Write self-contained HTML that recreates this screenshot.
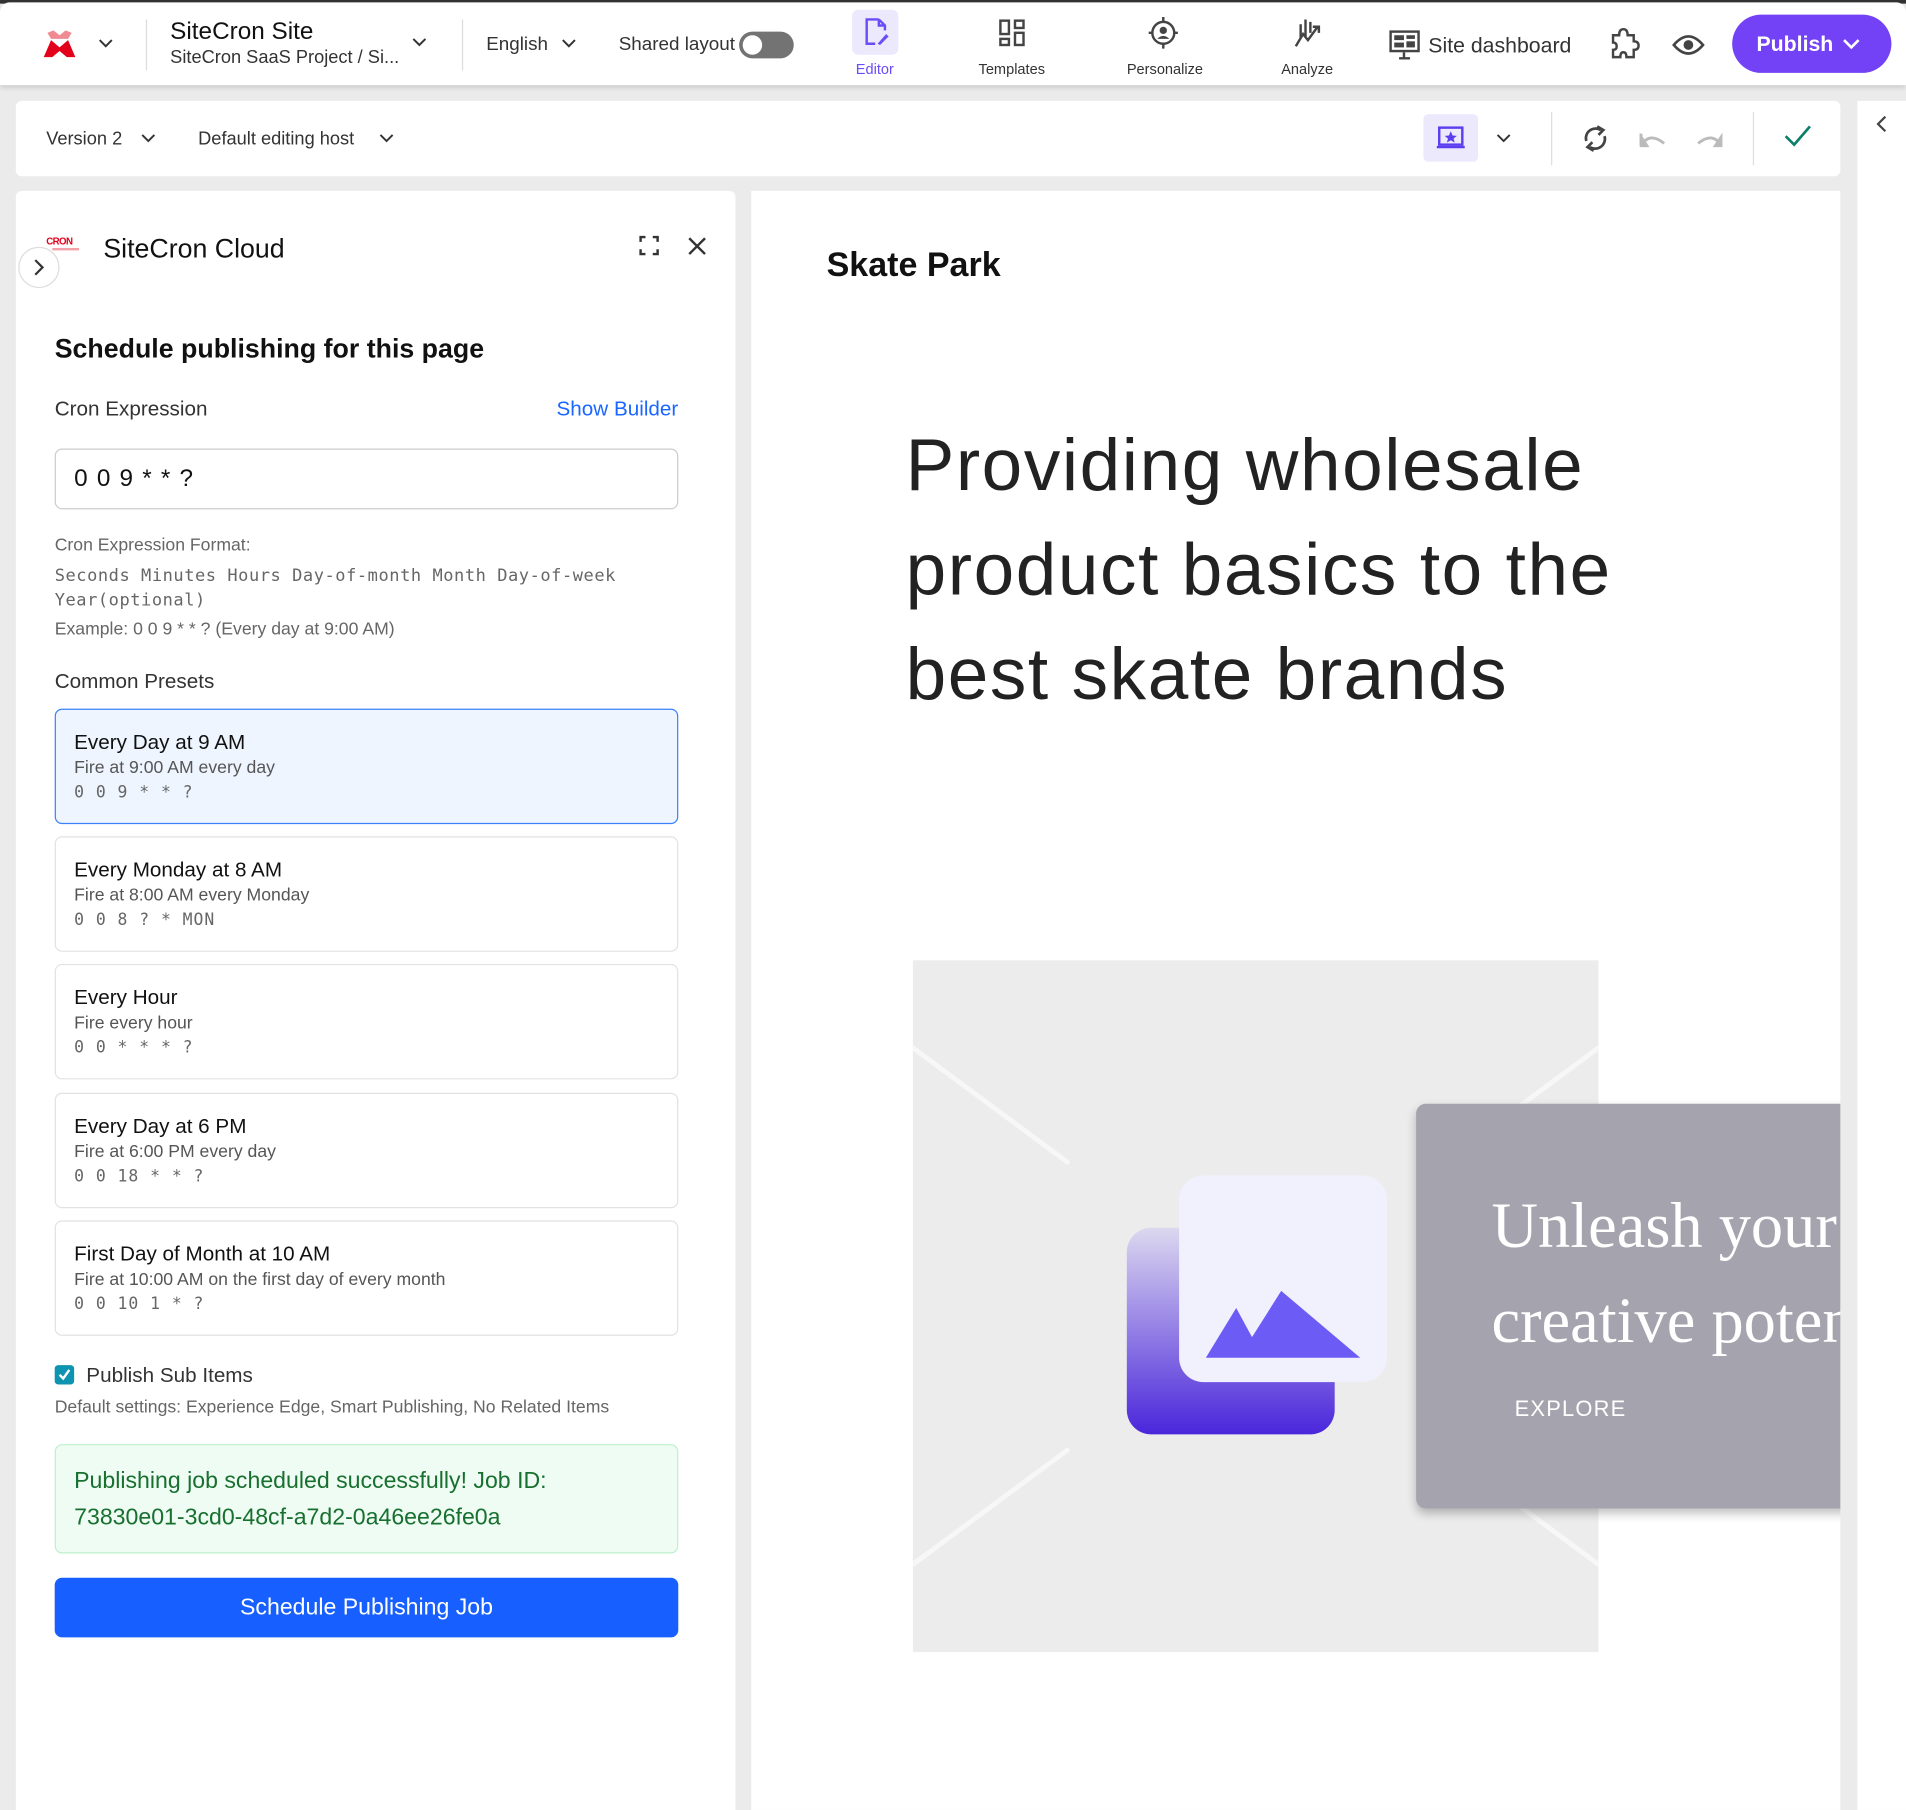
<!DOCTYPE html>
<html><head><meta charset="utf-8"><style>
*{margin:0;padding:0;box-sizing:border-box}
html,body{width:1906px;height:1810px;overflow:hidden;background:#ebebeb}
#w{position:absolute;left:0;top:0;width:1568px;height:1489px;transform:scale(1.21556);transform-origin:0 0;font-family:"Liberation Sans",sans-serif;color:#222}
.a{position:absolute;white-space:nowrap}
.c{display:flex;align-items:center}
.mono{font-family:"DejaVu Sans Mono","Liberation Mono",monospace}
.card{position:absolute;left:45px;width:513px;height:95px;border:1px solid #e2e2e2;border-radius:6px;background:#fff}
.card .t{position:absolute;left:15px;top:17px;font-size:17px;color:#111}
.card .d{position:absolute;left:15px;top:40px;font-size:14.5px;color:#555}
.card .m{position:absolute;left:15px;top:60px;font-size:13.5px;color:#666;letter-spacing:0.8px}
svg{position:absolute;overflow:visible}
</style></head><body><div id="w">
<!-- header -->
<div class="a" style="left:0;top:0;width:1568px;height:3px;background:#333"></div>
<div class="a" style="left:0;top:2px;width:1568px;height:68px;background:#fff;border-radius:8px 8px 0 0;box-shadow:0 2px 4px rgba(0,0,0,.12)"></div>
<svg style="left:36px;top:25px" width="26" height="24"><path d="M3 2 L8 0 L13 4 L18 0 L23 2 L20 7 L6 7 Z" fill="#f08a93"/><path d="M6 8 L13 14 L20 8 L26 22 L19 22 L13 17 L7 22 L0 22 Z" fill="#e3001b"/></svg>
<svg style="left:81px;top:32px" width="12" height="8"><path d="M1 1 L6 6 L11 1" stroke="#333" stroke-width="1.6" fill="none"/></svg>
<div class="a" style="left:120px;top:16px;width:1px;height:42px;background:#ddd"></div>
<div class="a" style="left:140px;top:15px;font-size:20px;color:#111">SiteCron Site</div>
<div class="a" style="left:140px;top:39px;font-size:15px;color:#333">SiteCron SaaS Project / Si...</div>
<svg style="left:339px;top:31px" width="12" height="8"><path d="M1 1 L6 6 L11 1" stroke="#333" stroke-width="1.6" fill="none"/></svg>
<div class="a" style="left:380px;top:16px;width:1px;height:42px;background:#ddd"></div>
<div class="a" style="left:400px;top:28px;font-size:15.5px;color:#333">English</div>
<svg style="left:462px;top:32px" width="12" height="8"><path d="M1 1 L6 6 L11 1" stroke="#333" stroke-width="1.6" fill="none"/></svg>
<div class="a" style="left:509px;top:28px;font-size:15.5px;color:#333">Shared layout</div>
<div class="a" style="left:608px;top:26px;width:45px;height:22px;border-radius:11px;background:#737373"></div>
<div class="a" style="left:611px;top:29px;width:16px;height:16px;border-radius:8px;background:#fff"></div>
<div class="a" style="left:701px;top:8px;width:38px;height:37px;border-radius:5px;background:#ece9fd"></div>
<svg style="left:710px;top:15px" width="22" height="24"><path d="M13 1 H3 V21 H10 M13 1 L18 6 V10 M13 1 V6 H18" stroke="#6b4cf6" stroke-width="2" fill="none"/><path d="M12 21 L19 13 L21 15 L14 22 Z" fill="#6b4cf6"/></svg>
<div class="a" style="left:704px;top:50px;font-size:12px;color:#6b4cf6">Editor</div>
<svg style="left:822px;top:16px" width="22" height="22"><rect x="1" y="1" width="7" height="11" fill="none" stroke="#444" stroke-width="2"/><rect x="13" y="1" width="7" height="6" fill="none" stroke="#444" stroke-width="2"/><rect x="1" y="16" width="7" height="5" fill="none" stroke="#444" stroke-width="2"/><rect x="13" y="11" width="7" height="10" fill="none" stroke="#444" stroke-width="2"/></svg>
<div class="a" style="left:805px;top:50px;font-size:12px;color:#333">Templates</div>
<svg style="left:945px;top:14px" width="24" height="26"><circle cx="12" cy="13" r="9" fill="none" stroke="#444" stroke-width="2"/><path d="M12 0 V4 M12 22 V26 M0 13 H3 M21 13 H24" stroke="#444" stroke-width="2"/><circle cx="12" cy="11" r="3" fill="#444"/><path d="M7 18 Q12 13 17 18" fill="#444"/></svg>
<div class="a" style="left:927px;top:50px;font-size:12px;color:#333">Personalize</div>
<svg style="left:1064px;top:14px" width="24" height="26"><path d="M2 24 L8 14 L12 19 L20 8 M16 8 H21 V13 M6 6 V18 M10 2 V16 M14 4 V13" stroke="#444" stroke-width="2" fill="none"/></svg>
<div class="a" style="left:1054px;top:50px;font-size:12px;color:#333">Analyze</div>
<svg style="left:1143px;top:25px" width="25" height="24"><rect x="1" y="1" width="23" height="16" fill="none" stroke="#444" stroke-width="2"/><rect x="4" y="4" width="8" height="4" fill="#444"/><rect x="14" y="4" width="7" height="3" fill="#444"/><rect x="14" y="9" width="7" height="5" fill="#444"/><rect x="4" y="10" width="8" height="4" fill="#444"/><path d="M12 18 V23 M8 23 H17" stroke="#444" stroke-width="2"/></svg>
<div class="a" style="left:1175px;top:27px;font-size:17.5px;color:#333">Site dashboard</div>
<svg style="left:1324px;top:23px" width="24" height="26"><path d="M3 6 H8 Q8 1 11.5 1 Q15 1 15 6 H20 V11 Q24 11 24 14.5 Q24 18 20 18 V24 H14 Q14 20 11.5 20 Q9 20 9 24 H3 V18 Q6 18 6 15 Q6 12 3 12 Z" fill="none" stroke="#444" stroke-width="2"/></svg>
<svg style="left:1376px;top:27px" width="26" height="20"><path d="M1 10 Q13 -4 25 10 Q13 24 1 10 Z" fill="none" stroke="#444" stroke-width="2.2"/><circle cx="13" cy="10" r="4" fill="#444"/></svg>
<div class="a c" style="left:1425px;top:12px;width:131px;height:48px;border-radius:24px;background:#7442f6;color:#fff;font-size:17.5px;font-weight:bold;padding-left:20px">Publish</div>
<svg style="left:1516px;top:32px" width="14" height="9"><path d="M1 1 L7 7 L13 1" stroke="#fff" stroke-width="2.2" fill="none"/></svg>

<!-- toolbar -->
<div class="a" style="left:13px;top:83px;width:1501px;height:62px;background:#fff;border-radius:5px"></div>
<div class="a" style="left:38px;top:106px;font-size:15px;color:#333">Version 2</div>
<svg style="left:116px;top:110px" width="12" height="8"><path d="M1 1 L6 6 L11 1" stroke="#333" stroke-width="1.6" fill="none"/></svg>
<div class="a" style="left:163px;top:106px;font-size:15px;color:#333">Default editing host</div>
<svg style="left:312px;top:110px" width="12" height="8"><path d="M1 1 L6 6 L11 1" stroke="#333" stroke-width="1.6" fill="none"/></svg>
<div class="a" style="left:1171px;top:94px;width:45px;height:39px;border-radius:4px;background:#ece9fd"></div>
<svg style="left:1182px;top:104px" width="23" height="19"><rect x="2" y="1" width="19" height="14" fill="none" stroke="#5b3ef0" stroke-width="2"/><path d="M0 17 H23" stroke="#5b3ef0" stroke-width="2"/><path d="M11.5 4 L13 7.5 L16.5 7.8 L13.8 10 L14.7 13.3 L11.5 11.4 L8.3 13.3 L9.2 10 L6.5 7.8 L10 7.5 Z" fill="#5b3ef0"/></svg>
<svg style="left:1231px;top:110px" width="12" height="8"><path d="M1 1 L6 6 L11 1" stroke="#333" stroke-width="1.6" fill="none"/></svg>
<div class="a" style="left:1276px;top:92px;width:1px;height:44px;background:#ddd"></div>
<svg style="left:1300px;top:102px" width="25" height="24"><path d="M5 14 A8 8 0 0 1 17 5 M20 10 A8 8 0 0 1 8 19" stroke="#444" stroke-width="2.2" fill="none"/><path d="M14 2 L19 5 L15 9 M11 22 L6 19 L10 15" stroke="#444" stroke-width="2.2" fill="none"/></svg>
<svg style="left:1347px;top:106px" width="25" height="16"><path d="M3 14 V4 M3 14 Q10 2 22 12" stroke="#bbb" stroke-width="2.4" fill="none"/><path d="M2 3 V15 H10 Z" fill="#bbb"/></svg>
<svg style="left:1394px;top:106px" width="25" height="16"><path d="M3 12 Q15 2 22 14" stroke="#bbb" stroke-width="2.4" fill="none"/><path d="M23 3 V15 H15 Z" fill="#bbb"/></svg>
<div class="a" style="left:1442px;top:92px;width:1px;height:44px;background:#ddd"></div>
<svg style="left:1468px;top:103px" width="22" height="18"><path d="M1 9 L8 16 L21 1" stroke="#0a7f6a" stroke-width="2.2" fill="none"/></svg>
<div class="a" style="left:1528px;top:83px;width:40px;height:1406px;background:#fff"></div>
<svg style="left:1543px;top:95px" width="9" height="14"><path d="M8 1 L2 7 L8 13" stroke="#444" stroke-width="1.8" fill="none"/></svg>

<!-- left panel -->
<div class="a" style="left:13px;top:157px;width:592px;height:1332px;background:#fff;border-radius:5px 5px 0 0"></div>
<div class="a" style="left:38px;top:194px;font-size:8px;font-weight:bold;color:#e3001b;letter-spacing:-0.5px">CRON</div>
<div class="a" style="left:43px;top:204px;width:22px;height:2px;background:#f3a0a8"></div>
<div class="a" style="left:15px;top:203px;width:34px;height:34px;border-radius:17px;border:1px solid #ddd;background:#fff"></div>
<svg style="left:28px;top:213px" width="8" height="14"><path d="M1 1 L7 7 L1 13" stroke="#333" stroke-width="1.8" fill="none"/></svg>
<div class="a" style="left:85px;top:192px;font-size:22px;color:#111">SiteCron Cloud</div>
<svg style="left:526px;top:194px" width="16" height="16"><path d="M1 5 V1 H5 M11 1 H15 V5 M15 11 V15 H11 M5 15 H1 V11" stroke="#333" stroke-width="2" fill="none"/></svg>
<svg style="left:566px;top:195px" width="15" height="15"><path d="M1 1 L14 14 M14 1 L1 14" stroke="#333" stroke-width="2" fill="none"/></svg>
<div class="a" style="left:45px;top:274px;font-size:22px;font-weight:bold;color:#111">Schedule publishing for this page</div>
<div class="a" style="left:45px;top:327px;font-size:17px;color:#333">Cron Expression</div>
<div class="a" style="right:1010px;top:327px;font-size:17px;color:#1a66ff">Show Builder</div>
<div class="a" style="left:45px;top:369px;width:513px;height:50px;border:1px solid #ccc;border-radius:6px"></div>
<div class="a" style="left:61px;top:383px;font-size:20px;color:#111;letter-spacing:1px">0 0 9 * * ?</div>
<div class="a" style="left:45px;top:441px;font-size:14.5px;color:#666">Cron Expression Format:</div>
<div class="a mono" style="left:45px;top:464px;font-size:14px;color:#666;line-height:20px;letter-spacing:0.45px">Seconds Minutes Hours Day-of-month Month Day-of-week<br>Year(optional)</div>
<div class="a" style="left:45px;top:510px;font-size:14.5px;color:#666">Example: 0 0 9 * * ? (Every day at 9:00 AM)</div>
<div class="a" style="left:45px;top:551px;font-size:17px;color:#333">Common Presets</div>
<div class="card" style="top:583px;background:#eef5ff;border-color:#3b82f6"><div class="t">Every Day at 9 AM</div><div class="d">Fire at 9:00 AM every day</div><div class="m mono">0 0 9 * * ?</div></div>
<div class="card" style="top:688px"><div class="t">Every Monday at 8 AM</div><div class="d">Fire at 8:00 AM every Monday</div><div class="m mono">0 0 8 ? * MON</div></div>
<div class="card" style="top:793px"><div class="t">Every Hour</div><div class="d">Fire every hour</div><div class="m mono">0 0 * * * ?</div></div>
<div class="card" style="top:899px"><div class="t">Every Day at 6 PM</div><div class="d">Fire at 6:00 PM every day</div><div class="m mono">0 0 18 * * ?</div></div>
<div class="card" style="top:1004px"><div class="t">First Day of Month at 10 AM</div><div class="d">Fire at 10:00 AM on the first day of every month</div><div class="m mono">0 0 10 1 * ?</div></div>
<div class="a" style="left:45px;top:1123px;width:16px;height:16px;border-radius:3px;background:#0e93b0"></div>
<svg style="left:48px;top:1126px" width="10" height="10"><path d="M1 5 L4 8 L9 1" stroke="#fff" stroke-width="2" fill="none"/></svg>
<div class="a" style="left:71px;top:1122px;font-size:17px;color:#333">Publish Sub Items</div>
<div class="a" style="left:45px;top:1150px;font-size:14.5px;color:#666">Default settings: Experience Edge, Smart Publishing, No Related Items</div>
<div class="a" style="left:45px;top:1188px;width:513px;height:90px;background:#effcf3;border:1px solid #bdf0cd;border-radius:6px"></div>
<div class="a" style="left:61px;top:1204px;font-size:19px;color:#17702f;line-height:30px">Publishing job scheduled successfully! Job ID:<br>73830e01-3cd0-48cf-a7d2-0a46ee26fe0a</div>
<div class="a c" style="left:45px;top:1298px;width:513px;height:49px;background:#1760ff;border-radius:6px;justify-content:center;color:#fff;font-size:19px">Schedule Publishing Job</div>

<!-- canvas -->
<div class="a" style="left:618px;top:157px;width:896px;height:1332px;background:#fff;overflow:hidden">
 <div class="a" style="left:62px;top:45px;font-size:28px;font-weight:bold;color:#111">Skate Park</div>
 <div class="a" style="left:127px;top:183px;font-size:60px;font-weight:500;color:#222;line-height:86px;letter-spacing:1.3px">Providing wholesale<br>product basics to the<br>best skate brands</div>
 <div class="a" style="left:133px;top:633px;width:564px;height:569px;background:#ececec;overflow:hidden">
  <svg style="left:0;top:0" width="564" height="569"><path d="M0 72 L127 166 M0 497 L127 403 M564 72 L437 166 M564 497 L437 403" stroke="#f7f7f7" stroke-width="4" stroke-linecap="round"/></svg>
 </div>
 <div class="a" style="left:309px;top:853px;width:171px;height:170px;border-radius:20px;background:linear-gradient(#dcd8ef,#4a26db)"></div>
 <div class="a" style="left:352px;top:810px;width:171px;height:170px;border-radius:20px;background:#f1f0fd"></div>
 <svg style="left:374px;top:905px" width="130" height="55"><path d="M0 55 L25 14 L38 38 L62 0 L127 55 Z" fill="#6c5bf5"/></svg>
 <div class="a" style="left:547px;top:751px;width:380px;height:333px;background:#a5a4ae;border-radius:8px;box-shadow:0 4px 8px rgba(0,0,0,.25)"></div>
 <div class="a" style="left:609px;top:813px;font-family:'Liberation Serif',serif;font-size:53px;color:#fff;line-height:78px">Unleash your<br>creative potential</div>
 <div class="a" style="left:628px;top:992px;font-size:18px;color:#fff;letter-spacing:1px">EXPLORE</div>
</div>
</div></body></html>
